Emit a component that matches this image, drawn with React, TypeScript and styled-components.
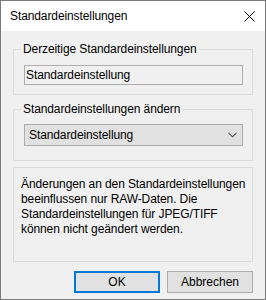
import React from 'react'
import styled, { createGlobalStyle } from 'styled-components'

const GlobalStyle = createGlobalStyle`
  html, body {
    margin: 0;
    padding: 0;
    background: #f0f0f0;
  }
  * {
    box-sizing: border-box;
  }
`

const Dialog = styled.div`
  width: 266px;
  height: 300px;
  border: 1px solid #7a7a7a;
  background: #f0f0f0;
  display: flex;
  flex-direction: column;
  font-family: 'Liberation Sans', Arial, sans-serif;
  font-size: 12px;
  letter-spacing: -0.1px;
  color: #000;
  overflow: hidden;
`

const TitleBar = styled.div`
  flex-shrink: 0;
  height: 30px;
  background: #fff;
  display: flex;
  align-items: center;
  justify-content: space-between;
  padding: 0 10px 0 9px;
`

const CloseButton = styled.button`
  width: 12px;
  height: 12px;
  padding: 0;
  border: 0;
  background: transparent;
  display: flex;
  align-items: center;
  justify-content: center;
`

const Body = styled.div`
  flex: 1;
  display: flex;
  flex-direction: column;
  padding: 11px 12px 6px;
`

const Group = styled.fieldset<{ $pad: string; $gap?: number }>`
  margin: ${(p) => p.$gap ?? 0}px 0 0;
  padding: ${(p) => p.$pad};
  border: 1px solid #dcdcdc;
  min-width: 0;
`

const Legend = styled.legend`
  padding: 0 2px;
  margin-left: -3px;
  line-height: 15px;
`

const ReadOnlyBox = styled.div`
  height: 20px;
  border: 1px solid #adadad;
  background: #f0f0f0;
  padding: 0 1px;
  display: flex;
  align-items: center;
`

const Combo = styled.div`
  height: 22px;
  border: 1px solid #adadad;
  background: #e1e1e1;
  display: flex;
  align-items: center;
  justify-content: space-between;
  padding: 0 5px 0 4px;
`

const Note = styled.p`
  margin: 0;
  line-height: 15px;
  white-space: nowrap;
`

const Buttons = styled.div`
  display: flex;
  justify-content: flex-end;
  gap: 7px;
  margin-top: 9px;
`

const Button = styled.button<{ $default?: boolean }>`
  width: 86px;
  height: 22px;
  padding: 0;
  font: inherit;
  color: #000;
  background: #e1e1e1;
  border: ${(p) => (p.$default ? '2px solid #0078d7' : '1px solid #adadad')};
`

const App = () => (
  <>
    <GlobalStyle />
    <Dialog>
      <TitleBar>
        <span>Standardeinstellungen</span>
        <CloseButton aria-label='Schließen'>
          <svg width='11' height='11' viewBox='0 0 11 11'>
            <path d='M0.5 0.5L10.5 10.5M10.5 0.5L0.5 10.5' stroke='#000' strokeWidth='1' />
          </svg>
        </CloseButton>
      </TitleBar>
      <Body>
        <Group $pad='8px 9px 9px 10px'>
          <Legend>Derzeitige Standardeinstellungen</Legend>
          <ReadOnlyBox>Standardeinstellung</ReadOnlyBox>
        </Group>
        <Group $pad='7px 9px 14px 10px' $gap={7}>
          <Legend>Standardeinstellungen ändern</Legend>
          <Combo>
            <span>Standardeinstellung</span>
            <svg width='9' height='6' viewBox='0 0 9 6'>
              <path d='M0.5 0.8L4.5 4.8L8.5 0.8' fill='none' stroke='#505050' strokeWidth='1.1' />
            </svg>
          </Combo>
        </Group>
        <Group $pad='9px 0 24px 7px' $gap={6}>
          <Note>
            Änderungen an den Standardeinstellungen
            <br />
            beeinflussen nur RAW-Daten. Die
            <br />
            Standardeinstellungen für JPEG/TIFF
            <br />
            können nicht geändert werden.
          </Note>
        </Group>
        <Buttons>
          <Button $default>OK</Button>
          <Button>Abbrechen</Button>
        </Buttons>
      </Body>
    </Dialog>
  </>
)

export default App
